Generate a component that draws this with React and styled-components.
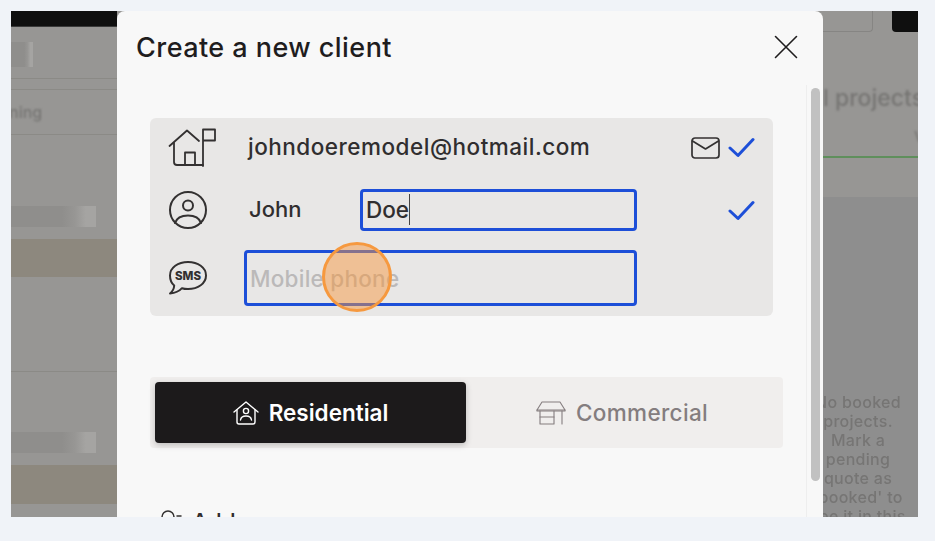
import React from "react";
import styled, { createGlobalStyle } from "styled-components";

const Global = createGlobalStyle`
  html, body { margin: 0; padding: 0; background: #f0f3f8; }
  * { box-sizing: border-box; }
`;

const Page = styled.div`
  width: 935px;
  height: 541px;
  padding: 11px 17px 24px 11px;
  background: #f0f3f8;
  font-family: "Inter", "Liberation Sans", sans-serif;
`;

const Frame = styled.div`
  display: flex;
  height: 506px;
  overflow: hidden;
  background: #979694;
`;

const LeftPane = styled.div`
  width: 106px;
  flex: none;
  display: flex;
  flex-direction: column;
  overflow: hidden;
  background: #979694;
`;

const BlackBar = styled.div`
  height: 16px;
  flex: none;
  background: #0f0f0f;
  border-bottom: 1px solid #3a3a3a;
`;

const Skeleton = styled.div`
  flex: none;
  height: ${(p) => p.$height || 21}px;
  width: ${(p) => p.$width}px;
  margin-top: ${(p) => p.$top}px;
  background: linear-gradient(90deg, #8f8e8c 0%, #8f8e8c 60%, #979694 75%, #a5a4a2 88%, #a5a4a2 100%);
`;

const SoftLine = styled.div`
  flex: none;
  height: 1px;
  margin-top: ${(p) => p.$top}px;
  background: ${(p) => p.$color || "#8b8a86"};
`;

const BlurText = styled.div`
  flex: none;
  margin-top: ${(p) => p.$top}px;
  margin-left: ${(p) => p.$left || 0}px;
  color: #767573;
  font-size: ${(p) => p.$size || 15}px;
  line-height: ${(p) => (p.$size ? p.$size + 3 : 18)}px;
  font-weight: 500;
  white-space: nowrap;
  filter: blur(0.8px);
`;

const TanBand = styled.div`
  flex: none;
  height: ${(p) => p.$height || 38}px;
  margin-top: ${(p) => p.$top}px;
  background: #8d887e;
  filter: blur(0.5px);
`;

const Modal = styled.div`
  width: 706px;
  flex: none;
  background: #f8f8f8;
  border-radius: 8px 8px 0 0;
  display: flex;
  flex-direction: column;
  position: relative;
`;

const Header = styled.div`
  height: 74px;
  flex: none;
  display: flex;
  align-items: center;
  justify-content: space-between;
  padding: 0 25px 2px 19px;
`;

const Title = styled.h1`
  margin: 0;
  font-size: 27px;
  font-weight: 500;
  color: #1f1d1e;
  letter-spacing: 0.45px;
`;

const CloseButton = styled.button`
  width: 24px;
  height: 24px;
  padding: 0;
  border: 0;
  background: none;
  display: block;
`;

const BodyWrap = styled.div`
  flex: 1;
  display: flex;
  min-height: 0;
`;

const Content = styled.div`
  flex: 1;
  padding: 33px 23px 0 33px;
  overflow: hidden;
`;

const ScrollGutter = styled.div`
  width: 17px;
  flex: none;
  padding: 3px 3px 0 4px;
  border-left: 1px solid #eeeeee;
`;

const Thumb = styled.div`
  height: 393px;
  border-radius: 5px;
  background: #c1c1c1;
`;

const InfoPanel = styled.div`
  width: 623px;
  height: 198px;
  background: #e8e7e6;
  border-radius: 6px;
  padding: 0 18px;
  display: grid;
  grid-template-columns: 58px 393px 1fr;
  grid-template-rows: 59px 66px 70px;
  column-gap: 18px;
  align-items: center;
`;

const IconCell = styled.div`
  display: flex;
  align-items: center;
  justify-content: flex-start;
  color: #333131;
`;

const Email = styled.div`
  padding: 0 0 2px 4px;
  white-space: nowrap;
  font-size: 22.5px;
  font-weight: 500;
  color: #302e2f;
  letter-spacing: 0.5px;
`;

const Trailing = styled.div`
  display: flex;
  align-items: center;
  justify-content: flex-end;
  gap: 8px;
`;

const NameGroup = styled.div`
  display: flex;
  align-items: center;
`;

const FirstName = styled.div`
  width: 116px;
  padding: 0 0 3px 5px;
  font-size: 22px;
  font-weight: 500;
  color: #302e2f;
`;

const NameField = styled.div`
  width: 277px;
  height: 42px;
  border: 3px solid #1d4fd8;
  border-radius: 4px;
  padding: 0 0 2px 3px;
  display: flex;
  align-items: center;
  font-size: 22.5px;
  font-weight: 500;
  color: #302e2f;
`;

const Caret = styled.span`
  display: inline-block;
  width: 1px;
  height: 31px;
  background: #444;
`;

const PhoneField = styled.div`
  width: 393px;
  height: 56px;
  border: 3px solid #1d4fd8;
  border-radius: 4px;
  padding-left: 3px;
  display: flex;
  align-items: center;
  font-size: 22.5px;
  font-weight: 500;
  letter-spacing: 0.25px;
  color: #bbb9b9;
`;

const Segment = styled.div`
  margin-top: 61px;
  width: 633px;
  height: 71px;
  padding: 5px;
  background: #f0eeed;
  border-radius: 4px;
  display: grid;
  grid-template-columns: 311px 1fr;
`;

const SegmentItem = styled.div`
  display: flex;
  align-items: center;
  justify-content: center;
  gap: 10px;
  border-radius: 4px;
  font-size: 22.5px;
  font-weight: ${(p) => (p.$active ? 600 : 500)};
  letter-spacing: ${(p) => (p.$active ? "0" : "0.35px")};
  background: ${(p) => (p.$active ? "#1c1a1b" : "transparent")};
  color: ${(p) => (p.$active ? "#ffffff" : "#847d7f")};
  box-shadow: ${(p) => (p.$active ? "0 2px 6px rgba(0,0,0,.22)" : "none")};
`;

const AddressRow = styled.div`
  margin-top: 60px;
  margin-left: 8px;
  display: flex;
  align-items: center;
  gap: 10px;
  font-size: 22.5px;
  font-weight: 500;
  color: #302e2f;
`;

const RightPane = styled.div`
  flex: 1;
  min-width: 0;
  display: flex;
  flex-direction: column;
  overflow: hidden;
  background: #979694;
`;

const TopButtons = styled.div`
  flex: none;
  height: 21px;
  display: flex;
  justify-content: space-between;
`;

const GhostButton = styled.div`
  width: 50px;
  height: 21px;
  border: 1px solid #868583;
  border-top: 0;
  border-left: 0;
  border-radius: 0 0 4px 0;
  filter: blur(0.4px);
`;

const DarkButton = styled.div`
  width: 26px;
  height: 21px;
  background: #0f0f0f;
  border-radius: 0 0 0 4px;
`;

const GreenLine = styled.div`
  flex: none;
  height: 2px;
  margin-top: 10px;
  background: #5f8f5c;
  filter: blur(0.4px);
`;

const LowerPanel = styled.div`
  flex: 1;
  margin-top: 39px;
  background: #8e8e8e;
  padding-top: 196px;
  text-align: center;
  overflow: hidden;
`;

const Notice = styled.div`
  width: 130px;
  margin-left: -30px;
  font-size: 16px;
  line-height: 19px;
  font-weight: 500;
  letter-spacing: 0.3px;
  color: #767574;
  filter: blur(0.7px);
  white-space: pre;
`;

const Spot = styled.div`
  position: absolute;
  left: 205px;
  top: 231px;
  width: 70px;
  height: 70px;
  border-radius: 50%;
  border: 3px solid #f6993f;
  background: rgba(246, 150, 60, 0.48);
`;

const HouseFlag = () => (
  <svg width="48" height="40" viewBox="0 0 48 40" fill="none" stroke="currentColor" strokeWidth="1.8" strokeLinecap="round" strokeLinejoin="round">
    <path d="M1.5 18 L19 2.5 L31 13" />
    <path d="M6 15 V34 Q6 37 9 37 H35" />
    <path d="M17 37 V24.5 H27 V37" />
    <path d="M35 38 V1.5 H47 V12.5 H35" />
  </svg>
);

const Person = () => (
  <svg width="40" height="38" viewBox="0 0 40 38" fill="none" stroke="currentColor" strokeWidth="2" strokeLinecap="round" strokeLinejoin="round">
    <circle cx="20" cy="19" r="18" />
    <circle cx="20" cy="14.5" r="5" />
    <path d="M7 32 C9 26 14 24.5 20 24.5 C26 24.5 31 26 33 32" />
  </svg>
);

const Sms = () => (
  <svg width="40" height="36" viewBox="0 0 40 36" fill="none" stroke="currentColor" strokeWidth="2" strokeLinecap="round" strokeLinejoin="round">
    <path d="M20 2 C30 2 38 7.5 38 15.5 C38 23.5 30 29 20 29 C17.5 29 15.5 28.7 14 28.2 C11.5 31 7.5 33 2 33.5 C4.5 31.5 6 29 6.2 25.5 C3.2 23 2 19.5 2 15.5 C2 7.5 10 2 20 2 Z" />
    <text x="20" y="20" textAnchor="middle" fontSize="11.5" fontWeight="800" fill="currentColor" stroke="none" fontFamily="Inter, sans-serif">SMS</text>
  </svg>
);

const Mail = () => (
  <svg width="29" height="22" viewBox="0 0 29 22" fill="none" stroke="#333131" strokeWidth="1.7" strokeLinecap="round" strokeLinejoin="round">
    <rect x="1" y="1" width="27" height="20" rx="3" />
    <path d="M1.5 4 L14.5 12 L27.5 4" />
  </svg>
);

const Check = () => (
  <svg width="27" height="21" viewBox="0 0 27 21" fill="none" stroke="#1d4fd8" strokeWidth="3" strokeLinecap="round" strokeLinejoin="round">
    <path d="M2 11 L10 18.5 L25 2.5" />
  </svg>
);

const CloseX = () => (
  <svg width="24" height="24" viewBox="0 0 24 24" fill="none" stroke="#1f1d1e" strokeWidth="1.6" strokeLinecap="round">
    <path d="M1.5 1.5 L22.5 22.5 M22.5 1.5 L1.5 22.5" />
  </svg>
);

const HomeUser = () => (
  <svg width="26" height="24" viewBox="0 0 26 24" fill="none" stroke="#fff" strokeWidth="1.4" strokeLinecap="round" strokeLinejoin="round">
    <path d="M1 11 L13 1 L25 11" />
    <path d="M4 9 V21 Q4 23 6 23 H20 Q22 23 22 21 V9" />
    <circle cx="13" cy="10" r="2.6" />
    <path d="M7.5 19 C8 15.5 10.5 15 13 15 C15.5 15 18 15.5 18.5 19" />
  </svg>
);

const Store = () => (
  <svg width="30" height="24" viewBox="0 0 30 24" fill="none" stroke="#847d7f" strokeWidth="1.1" strokeLinecap="round" strokeLinejoin="round">
    <path d="M6 1 H24 L29 9 H1 Z" />
    <path d="M1 9 V10 H29 V9" />
    <path d="M4 10 V23 H18 V10" />
    <path d="M4 16 H18" />
    <path d="M26 10 V23" />
  </svg>
);

const AddressIcon = () => (
  <svg width="24" height="24" viewBox="0 0 24 24" fill="none" stroke="#333131" strokeWidth="1.5" strokeLinecap="round">
    <circle cx="10" cy="7" r="6" />
    <path d="M1 22 C3 16 6 15 10 15 C14 15 17 16 19 22" />
    <path d="M19 6 H23" />
  </svg>
);

export default function App() {
  return (
    <Page>
      <Global />
      <Frame>
        <LeftPane>
          <BlackBar />
          <Skeleton $width={22} $top={15} $height={25} />
          <SoftLine $top={11} />
          <SoftLine $top={10} />
          <BlurText $top={13} $left={-2} $size={16}>ning</BlurText>
          <SoftLine $top={12} />
          <Skeleton $width={85} $top={71} />
          <TanBand $top={12} />
          <SoftLine $top={94} />
          <Skeleton $width={85} $top={60} />
          <TanBand $top={12} $height={39} />
        </LeftPane>
        <Modal>
          <Header>
            <Title>Create a new client</Title>
            <CloseButton aria-label="Close"><CloseX /></CloseButton>
          </Header>
          <BodyWrap>
            <Content>
              <InfoPanel>
                <IconCell><HouseFlag /></IconCell>
                <Email>johndoeremodel@hotmail.com</Email>
                <Trailing><Mail /><Check /></Trailing>
                <IconCell><Person /></IconCell>
                <NameGroup>
                  <FirstName>John</FirstName>
                  <NameField>Doe<Caret /></NameField>
                </NameGroup>
                <Trailing><Check /></Trailing>
                <IconCell><Sms /></IconCell>
                <PhoneField>Mobile phone</PhoneField>
                <div />
              </InfoPanel>
              <Segment>
                <SegmentItem $active><HomeUser />Residential</SegmentItem>
                <SegmentItem><Store />Commercial</SegmentItem>
              </Segment>
              <AddressRow><AddressIcon />Address</AddressRow>
            </Content>
            <ScrollGutter><Thumb /></ScrollGutter>
          </BodyWrap>
          <Spot />
        </Modal>
        <RightPane>
          <TopButtons><GhostButton /><DarkButton /></TopButtons>
          <BlurText $top={53} $size={23}>l projects</BlurText>
          <BlurText $top={17} $left={91} $size={15}>V</BlurText>
          <GreenLine />
          <LowerPanel>
            <Notice>{"No booked\nprojects.\nMark a\npending\nquote as\n'booked' to\nsee it in this"}</Notice>
          </LowerPanel>
        </RightPane>
      </Frame>
    </Page>
  );
}
